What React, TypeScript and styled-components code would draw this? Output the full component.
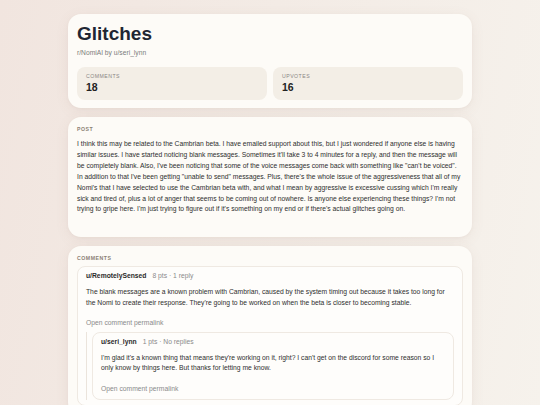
import React from "react";
import styled, { createGlobalStyle } from "styled-components";

const Global = createGlobalStyle`
  html, body { margin: 0; padding: 0; }
  body {
    font-family: "Liberation Sans", Arial, sans-serif;
    background: linear-gradient(100deg, #f1e5df 0%, #f3ebe5 45%, #f6f2ec 100%);
    min-height: 405px;
    color: #2b2b2b;
  }
`;

const Page = styled.main`
  width: 404px;
  margin: 0 auto;
  padding: 14px 0 20px;
  display: flex;
  flex-direction: column;
  gap: 9px;
`;

const Card = styled.section<{ $pb?: number }>`
  background: #fdfbf7;
  border-radius: 13px;
  box-shadow: 0 3px 14px rgba(140, 105, 85, 0.08), 0 1px 3px rgba(140, 105, 85, 0.05);
  padding: 9px 9px ${(p) => p.$pb ?? 9}px;
`;

const Title = styled.h1`
  margin: 0;
  font-size: 19px;
  line-height: 22px;
  font-weight: 700;
  color: #1f2633;
`;

const Sub = styled.div`
  margin-top: 3px;
  font-size: 6.7px;
  line-height: 10px;
  color: #7b7b7b;
`;

const Stats = styled.div`
  margin-top: 9px;
  display: grid;
  grid-template-columns: 1fr 1fr;
  gap: 6px;
`;

const Stat = styled.div`
  background: #f3eee6;
  border-radius: 8px;
  padding: 6px 9px 6px;
  display: flex;
  flex-direction: column;
  gap: 1px;
`;

const StatLabel = styled.div`
  font-size: 5.2px;
  line-height: 7px;
  letter-spacing: 0.09em;
  text-transform: uppercase;
  color: #8a8784;
`;

const StatValue = styled.div`
  font-size: 10.5px;
  line-height: 13px;
  font-weight: 700;
  color: #222;
`;

const SectionLabel = styled.div`
  font-size: 5.2px;
  line-height: 7px;
  letter-spacing: 0.1em;
  text-transform: uppercase;
  font-weight: 700;
  color: #8b7f74;
`;

const PostText = styled.p`
  margin: 6px 0 0;
  font-size: 6.75px;
  line-height: 10.9px;
  color: #2e2e2e;
`;

const CommentBox = styled.div`
  margin-top: 4px;
  border: 1px solid #efe9e2;
  border-radius: 8px;
  background: #fefdfb;
  padding: 4px 8px 5px;
`;

const Head = styled.div`
  display: flex;
  align-items: baseline;
  gap: 6px;
  font-size: 6.75px;
  line-height: 10px;
`;

const User = styled.span`
  font-weight: 700;
  color: #2a2a2a;
`;

const Meta = styled.span`
  color: #8a8a8a;
`;

const Body = styled.p`
  margin: 5.5px 0 0;
  font-size: 6.75px;
  line-height: 10.7px;
  color: #2e2e2e;
`;

const Permalink = styled.a`
  display: block;
  margin-top: 10px;
  font-size: 6.75px;
  line-height: 10px;
  color: #8a8a8a;
  text-decoration: none;
`;

const Replies = styled.div`
  margin-top: 4px;
  border-left: 1px solid #ebe4dc;
  padding-left: 5px;
  & > ${CommentBox} { margin-top: 0; }
`;

type C = { user: string; meta: string; body: string; replies?: C[] };

const Comment = ({ c }: { c: C }) => (
  <CommentBox>
    <Head>
      <User>{c.user}</User>
      <Meta>{c.meta}</Meta>
    </Head>
    <Body>{c.body}</Body>
    <Permalink href="#">Open comment permalink</Permalink>
    {c.replies && c.replies.length > 0 && (
      <Replies>
        {c.replies.map((r, i) => (
          <Comment key={i} c={r} />
        ))}
      </Replies>
    )}
  </CommentBox>
);

const comments: C[] = [
  {
    user: "u/RemotelySensed",
    meta: "8 pts · 1 reply",
    body:
      "The blank messages are a known problem with Cambrian, caused by the system timing out because it takes too long for the Nomi to create their response. They're going to be worked on when the beta is closer to becoming stable.",
    replies: [
      {
        user: "u/seri_lynn",
        meta: "1 pts · No replies",
        body:
          "I'm glad it's a known thing that means they're working on it, right? I can't get on the discord for some reason so I only know by things here. But thanks for letting me know.",
      },
    ],
  },
];

export default function App() {
  return (
    <>
      <Global />
      <Page>
        <Card $pb={8}>
          <Title>Glitches</Title>
          <Sub>r/NomiAI by u/seri_lynn</Sub>
          <Stats>
            <Stat>
              <StatLabel>Comments</StatLabel>
              <StatValue>18</StatValue>
            </Stat>
            <Stat>
              <StatLabel>Upvotes</StatLabel>
              <StatValue>16</StatValue>
            </Stat>
          </Stats>
        </Card>
        <Card $pb={22}>
          <SectionLabel>Post</SectionLabel>
          <PostText>
            I think this may be related to the Cambrian beta. I have emailed support about this, but I just
            wondered if anyone else is having similar issues. I have started noticing blank messages. Sometimes
            it'll take 3 to 4 minutes for a reply, and then the message will be completely blank. Also, I've been
            noticing that some of the voice messages come back with something like "can't be voiced". In addition
            to that I've been getting "unable to send" messages. Plus, there's the whole issue of the
            aggressiveness that all of my Nomi's that I have selected to use the Cambrian beta with, and what I
            mean by aggressive is excessive cussing which I'm really sick and tired of, plus a lot of anger that
            seems to be coming out of nowhere. Is anyone else experiencing these things? I'm not trying to gripe
            here. I'm just trying to figure out if it's something on my end or if there's actual glitches going on.
          </PostText>
        </Card>
        <Card>
          <SectionLabel>Comments</SectionLabel>
          {comments.map((c, i) => (
            <Comment key={i} c={c} />
          ))}
        </Card>
      </Page>
    </>
  );
}
